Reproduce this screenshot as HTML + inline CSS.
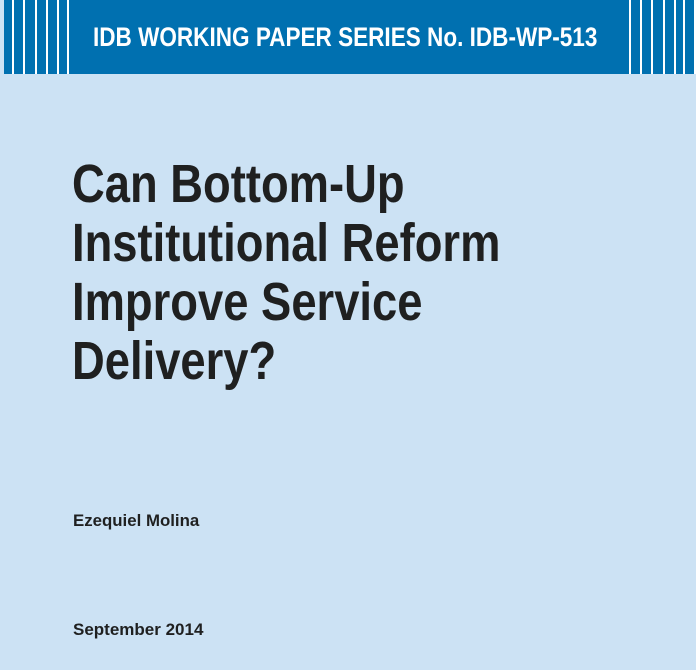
<!DOCTYPE html>
<html><head><meta charset="utf-8"><style>
body{margin:0;width:696px;height:670px;background:#cce2f4;position:relative;overflow:hidden;font-family:"Liberation Sans",sans-serif}
.hd{position:absolute;left:4px;top:0;width:692px;height:74px;background:#0070b0}
.l{position:absolute;top:0;width:2px;height:74px;background:#fff}
.t{position:absolute;white-space:nowrap;transform-origin:0 0}
</style></head><body>
<div class="hd"></div>
<div class="l" style="left:12px"></div><div class="l" style="left:23px"></div><div class="l" style="left:35px"></div><div class="l" style="left:46px"></div><div class="l" style="left:57px"></div><div class="l" style="left:67px"></div>
<div class="l" style="left:629px"></div><div class="l" style="left:640px"></div><div class="l" style="left:651px"></div><div class="l" style="left:663px"></div><div class="l" style="left:674px"></div><div class="l" style="left:683px"></div><div class="l" style="left:694px"></div>
<div class="t" style="left:93px;top:22px;font-size:27px;font-weight:bold;color:#fff;transform:scaleX(0.835)">IDB WORKING PAPER SERIES No. IDB-WP-513</div>
<div class="t" style="left:72px;top:155px;font-size:54px;line-height:59px;font-weight:bold;color:#1f2020;transform:scaleX(0.84)">Can Bottom-Up<br>Institutional Reform<br>Improve Service<br>Delivery?</div>
<div class="t" style="left:73px;top:511px;font-size:17px;font-weight:bold;color:#1f2020;transform:scaleX(0.99)">Ezequiel Molina</div>
<div class="t" style="left:73px;top:620px;font-size:17px;font-weight:bold;color:#1f2020;transform:scaleX(1.0)">September 2014</div>
</body></html>
